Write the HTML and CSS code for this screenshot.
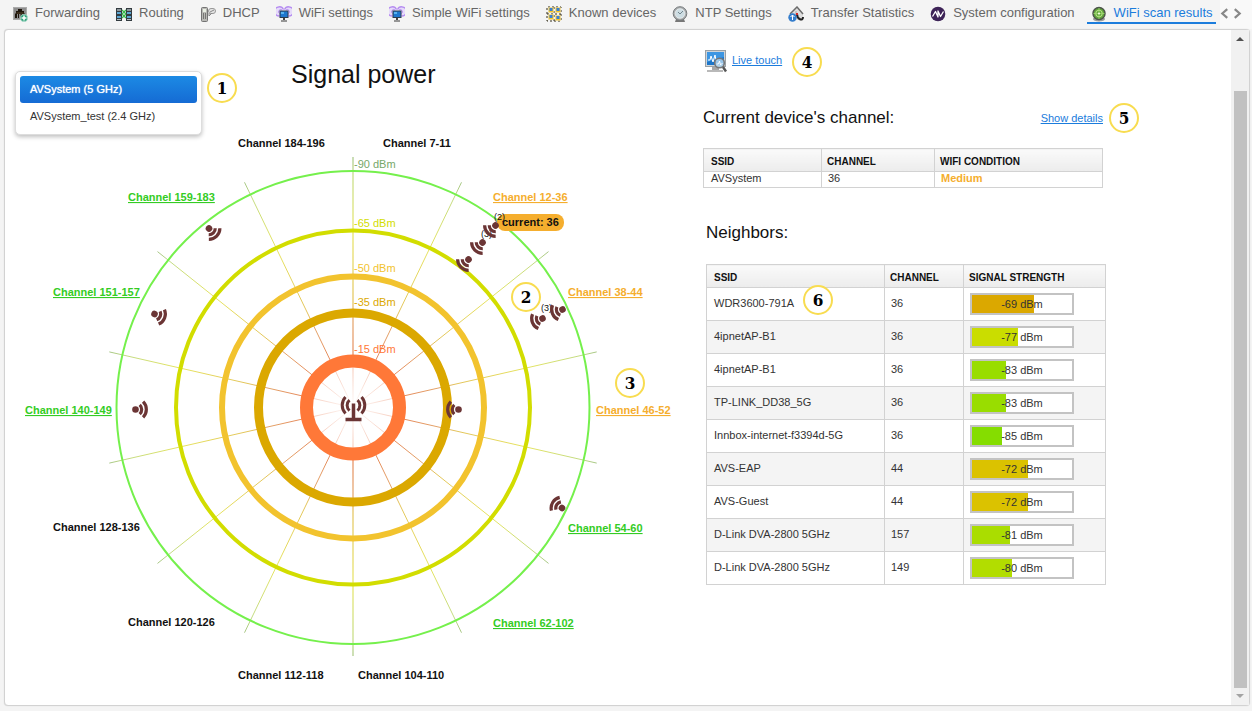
FILE: index.html
```html
<!DOCTYPE html>
<html lang="en">
<head>
<meta charset="utf-8">
<title>WiFi scan results</title>
<link rel="stylesheet" href="styles.css">
</head>
<body>
<nav class="tabs">
  <div class="tab-list">
    <a class="tab" href="#forwarding">
      <svg class="tab-icon" viewBox="0 0 16 16"><rect x="1.500" y="1.500" width="13" height="12" fill="#8d8d8d" stroke="#aaa"/><path d="M3 12V8l1-1V5h2V3h4v2h2v2l1 1v4h-2V8h-1v4H8.500V8H7v4H6V8H5v4z" fill="#1d150c"/><path d="M4.500 7h7" stroke="#5b4526"/><circle cx="12" cy="12" r="3.700" fill="#2ea07a" stroke="#d4eee4" stroke-width=".6"/><path d="M12 9.500v5M9.500 12h5" stroke="#fff" stroke-width="1.500"/></svg>
      <span>Forwarding</span></a>
    <a class="tab" href="#routing">
      <svg class="tab-icon" viewBox="0 0 16 16"><path d="M0 2h6v13H0zM10 2h6v13h-6z" fill="#333b40"/><path d="M1 3h4v2H1zM11 3h4v2h-4z" fill="#8e979b"/><path d="M1 6h4v2H1zM1 10h4v2H1zM11 6h4v2h-4zM11 10h4v2h-4z" fill="#5ba6d2"/><path d="M1 13h4v1H1zM11 13h4v1h-4z" fill="#b5bec2"/><path d="M6 4l4 4M10 4L6 8M6 8l4 4M10 8l-4 4" stroke="#35b949" stroke-width="1.300"/></svg>
      <span>Routing</span></a>
    <a class="tab" href="#dhcp">
      <svg class="tab-icon" viewBox="0 0 16 16"><rect x="1.500" y="1.500" width="6" height="14" rx="1" fill="#b9b9b5" stroke="#747474"/><path d="M3 3h3v3H3z" fill="#e9efe3"/><path d="M3 8h1M5 8h1M3 10h1M5 10h1M3 12h1M5 12h1" stroke="#333"/><rect x="8.500" y="2.500" width="7" height="5" rx="2.500" fill="#e4e4e4" stroke="#999"/><path d="M9 7v3l3-3M10 6l4-2" stroke="#888" fill="none"/></svg>
      <span>DHCP</span></a>
    <a class="tab" href="#wifi">
      <svg class="tab-icon" viewBox="0 0 16 16"><use href="#wifi-monitor"/></svg>
      <span>WiFi settings</span></a>
    <a class="tab" href="#simple-wifi">
      <svg class="tab-icon" viewBox="0 0 16 16"><use href="#wifi-monitor"/></svg>
      <span>Simple WiFi settings</span></a>
    <a class="tab" href="#devices">
      <svg class="tab-icon" viewBox="0 0 16 16"><path d="M1 8V1h14v14H1V8h14M8 1v14" fill="none" stroke="#332c18" stroke-dasharray="2 2"/><path d="M2.500 1.500h5v5h-5zM9.500 1.500h5v5h-5zM2.500 8.500h5v5h-5zM9.500 9.500h5v5h-5z" fill="#f4c426" stroke="#e8d9a0" stroke-width=".5"/><path d="M3.500 2h3v3h-3zM10.500 2h3v3h-3zM3.500 9h3v3h-3zM10.500 10h3v3h-3z" fill="#377fd5"/></svg>
      <span>Known devices</span></a>
    <a class="tab" href="#ntp">
      <svg class="tab-icon" viewBox="0 0 16 16"><path d="M4 13h8l1 3H3z" fill="#777"/><circle cx="8" cy="7.500" r="6.800" fill="#a9adaf" stroke="#767a7c"/><circle cx="8" cy="7.500" r="4.800" fill="#cddde3" stroke="#f1f1f1" stroke-width=".7"/><path d="M8 8l3-3M8 8L6 6" stroke="#71858e"/></svg>
      <span>NTP Settings</span></a>
    <a class="tab" href="#transfer">
      <svg class="tab-icon" viewBox="0 0 16 16"><path d="M3 8l6-6 6 6v6H5z" fill="#dedede"/><path d="M2 8l7-7 6 7" fill="none" stroke="#6b6b6b" stroke-width="1.500"/><path d="M8 5v5l3 4" fill="none" stroke="#aaa"/><path d="M9 8c0 5 6 8 6 3" fill="none" stroke="#222" stroke-width="2"/><path d="M8 7h2v2H8z" fill="#d52a24"/><circle cx="4.500" cy="11.500" r="4.200" fill="#347dcc"/><path d="M4.500 9v5M2.500 11l2-2 2 2" stroke="#fff" fill="none"/></svg>
      <span>Transfer Statistics</span></a>
    <a class="tab" href="#system">
      <svg class="tab-icon" viewBox="0 0 16 16"><circle cx="8" cy="8" r="7.300" fill="#3d2357"/><path d="M2.500 10.500L5.500 5.500 8 11V5l2.500 5.500 3-5" fill="none" stroke="#fff" stroke-width="1.300" stroke-linejoin="round"/></svg>
      <span>System configuration</span></a>
    <a class="tab tab-active" href="#scan" aria-current="page">
      <svg class="tab-icon" viewBox="0 0 16 16"><ellipse cx="8" cy="13" rx="6" ry="2.500" fill="#9b9b9b"/><circle cx="8" cy="7.500" r="6" fill="#61a63b" stroke="#4d554a" stroke-width="1.500"/><circle cx="8" cy="7.500" r="3.300" fill="none" stroke="#bfe68f"/><path d="M8 2v11M2.500 7.500h11" stroke="#9fd672" stroke-width=".8"/><circle cx="8" cy="7.500" r="1" fill="#f4ffe8"/></svg>
      <span>WiFi scan results</span></a>
  </div>
  <div class="tab-scroll">
    <button class="tab-arrow" aria-label="Previous tabs"><svg viewBox="0 0 8 10"><path d="M6.500 1L2 5l4.500 4"/></svg></button>
    <button class="tab-arrow" aria-label="Next tabs"><svg viewBox="0 0 8 10"><path d="M1.500 1L6 5 1.500 9"/></svg></button>
  </div>
</nav>

<main class="panel">
  <div class="content">
    <section class="signal">
      <header class="signal-head">
        <div class="network-menu">
          <button class="network network-on">AVSystem (5 GHz)</button>
          <button class="network">AVSystem_test (2.4 GHz)</button>
        </div>
        <span class="badge">1</span>
        <h1 class="title">Signal power</h1>
      </header>

      <svg class="radar" viewBox="5 136 680 560">
        <defs>
          <radialGradient id="spoke" gradientUnits="userSpaceOnUse" cx="353" cy="407.500" r="252">
            <stop offset="0" stop-color="#fff"/>
            <stop offset=".16" stop-color="#f7cfc0"/>
            <stop offset=".21" stop-color="#e58a5c"/>
            <stop offset=".36" stop-color="#e3a66a"/>
            <stop offset=".42" stop-color="#e3c35a"/>
            <stop offset=".7" stop-color="#e6e460"/>
            <stop offset=".92" stop-color="#c3db82"/>
            <stop offset="1" stop-color="#a3c486"/>
          </radialGradient>
          <g id="wifi-monitor">
            <path d="M3.500 10A4.600 4.600 0 1 1 7.500 3.500M12.500 10A4.600 4.600 0 1 0 8.500 3.500" fill="#e6dbfa" stroke="#b58cf0" stroke-width="1.300"/>
            <path d="M3.500 7.500A2 2 0 1 1 6 4M12.500 7.500A2 2 0 1 0 10 4" fill="none" stroke="#b58cf0"/>
            <rect x="4" y="5" width="8" height="6.500" fill="#1f78cf" stroke="#2d3c50"/>
            <path d="M5 6h3v2H5z" fill="#58b4f2"/>
            <path d="M7 12h2v2H7z" fill="#444"/><path d="M5 15h6" stroke="#777" stroke-width="1.500"/>
          </g>
          <g id="ap">
            <circle r="3.300" fill="#6b3535"/>
            <path d="M4.200-4.600A6.300 6.300 0 0 1 4.200 4.600M7.600-7.800A11 11 0 0 1 7.600 7.800" fill="none" stroke="#6b3535" stroke-width="3.200"/>
          </g>
        </defs>

        <g class="spokes">
          <g id="half">
            <path class="spoke-axis" d="M353 157V407"/>
            <path d="M353 407.500L461.500 182.300M353 407.500L548.500 251.600M353 407.500L596.700 351.900M353 407.500L596.700 463.100M353 407.500L548.500 563.400M353 407.500L461.500 632.700"/>
          </g>
          <path class="spoke-axis" d="M353 408V656"/>
          <path d="M353 407.500L244.500 182.300M353 407.500L157.500 251.600M353 407.500L109.300 351.900M353 407.500L109.300 463.100M353 407.500L157.500 563.400M353 407.500L244.500 632.700"/>
        </g>
        <g class="rings">
          <circle cx="353" cy="407.500" r="236.500" stroke="#75f04c" stroke-width="2"/>
          <circle cx="353" cy="407.500" r="177" stroke="#d2dd00" stroke-width="4"/>
          <circle cx="353" cy="407.500" r="131" stroke="#f2c32e" stroke-width="6"/>
          <circle cx="353" cy="407.500" r="94.500" stroke="#dba800" stroke-width="9"/>
          <circle cx="353" cy="407.500" r="46.500" stroke="#ff7838" stroke-width="13"/>
        </g>

        <g class="level">
          <text x="354" y="168" fill="#76a768">-90 dBm</text>
          <text x="354" y="227" fill="#d2dd00">-65 dBm</text>
          <text x="354" y="272" fill="#f2c32e">-50 dBm</text>
          <text x="354" y="306" fill="#dba800">-35 dBm</text>
          <text x="354" y="353" fill="#ff7838">-15 dBm</text>
        </g>

        <g class="antenna">
          <path d="M349.500 400A7 7 0 0 0 349.500 410.500M357.500 400A7 7 0 0 1 357.500 410.500M345.500 397A12 12 0 0 0 345.500 413.500M361.500 397A12 12 0 0 1 361.500 413.500"/>
          <path class="mast" d="M353.500 403.500V419M345.500 419.500H361.500"/>
        </g>

        <g class="channel">
          <text x="238" y="147">Channel 184-196</text>
          <text x="383" y="147">Channel 7-11</text>
          <a class="good" href="#ch159"><text x="128" y="201">Channel 159-183</text></a>
          <a class="medium" href="#ch12"><text x="493" y="201">Channel 12-36</text></a>
          <a class="good" href="#ch151"><text x="53" y="296">Channel 151-157</text></a>
          <a class="medium" href="#ch38"><text x="568" y="296">Channel 38-44</text></a>
          <a class="good" href="#ch140"><text x="25" y="414">Channel 140-149</text></a>
          <a class="medium" href="#ch46"><text x="596" y="414">Channel 46-52</text></a>
          <text x="53" y="531">Channel 128-136</text>
          <a class="good" href="#ch54"><text x="568" y="532">Channel 54-60</text></a>
          <text x="128" y="626">Channel 120-126</text>
          <a class="good" href="#ch62"><text x="493" y="627">Channel 62-102</text></a>
          <text x="238" y="679">Channel 112-118</text>
          <text x="358" y="679">Channel 104-110</text>
          <rect x="497" y="214" width="67" height="17" rx="8" fill="#f5ae2e"/>
          <text x="502" y="226">current: 36</text>
        </g>

        <g class="count">
          <text x="494" y="220">(2)</text>
          <text x="481" y="237">(3)</text>
          <text x="541" y="311">(3)</text>
        </g>
        <use href="#ap" transform="translate(209 228.500) rotate(45)"/>
        <use href="#ap" transform="translate(154.500 314) rotate(22)"/>
        <use href="#ap" transform="translate(135.500 409.500)"/>
        <use href="#ap" transform="translate(495.500 225.500) rotate(135)"/>
        <use href="#ap" transform="translate(482.500 242.500) rotate(135)"/>
        <use href="#ap" transform="translate(468.500 259.500) rotate(135)"/>
        <use href="#ap" transform="translate(542.500 318.500) rotate(158)"/>
        <use href="#ap" transform="translate(562.500 309.500) rotate(158)"/>
        <use href="#ap" transform="translate(458.500 409.500) rotate(180)"/>
        <use href="#ap" transform="translate(562 508) rotate(212)"/>

        <g class="note">
          <circle cx="526" cy="297" r="14"/><text x="526" y="303">2</text>
          <circle cx="630" cy="383" r="14"/><text x="630" y="389">3</text>
        </g>
      </svg>
    </section>

    <section class="details">
      <div class="live">
        <svg class="live-icon" viewBox="0 0 22 24"><rect x=".5" y=".5" width="20" height="16" fill="#d0d4d7" stroke="#9ba1a5"/><rect x="2" y="2" width="17" height="13" fill="#1d76c9"/><path d="M2 2h17v5L2 12z" fill="#3d96e2"/><path d="M3 10h2l1-4 2 6 2-7 1 5h2" fill="none" stroke="#fff"/><path d="M7 17h7v3H7z" fill="#a7a7a7"/><path d="M2 21h16" stroke="#b9b9b9" stroke-width="2"/><circle cx="14.500" cy="13" r="4.800" fill="#aed3ee" fill-opacity=".85" stroke="#777" stroke-width="1.600"/><path d="M11.500 14h2l1-3 1 4 2-2" fill="none" stroke="#fff"/><path d="M18 17l3 4.500" stroke="#555" stroke-width="2.400"/></svg>
        <a class="link" href="#live">Live touch</a>
        <span class="badge">4</span>
      </div>
      <div class="section-head">
        <h2>Current device's channel:</h2>
        <a class="link" href="#details">Show details</a>
        <span class="badge">5</span>
      </div>
      <table class="grid current">
        <colgroup><col class="c-name"><col class="c-chan"><col></colgroup>
        <thead><tr><th>SSID</th><th>CHANNEL</th><th>WIFI CONDITION</th></tr></thead>
        <tbody><tr><td>AVSystem</td><td>36</td><td class="condition">Medium</td></tr></tbody>
      </table>

      <div class="neighbors">
        <h2>Neighbors:</h2>
        <table class="grid scan">
          <colgroup><col class="c-ssid"><col class="c-num"><col></colgroup>
          <thead><tr><th>SSID</th><th>CHANNEL</th><th>SIGNAL STRENGTH</th></tr></thead>
          <tbody>
            <tr><td class="noted">WDR3600-791A<span class="badge badge-over">6</span></td><td>36</td><td><div class="bar"><i style="width:62%;background:#dba800"></i><span>-69 dBm</span></div></td></tr>
            <tr><td>4ipnetAP-B1</td><td>36</td><td><div class="bar"><i style="width:46%;background:#cadd00"></i><span>-77 dBm</span></div></td></tr>
            <tr><td>4ipnetAP-B1</td><td>36</td><td><div class="bar"><i style="width:34%;background:#99dd00"></i><span>-83 dBm</span></div></td></tr>
            <tr><td>TP-LINK_DD38_5G</td><td>36</td><td><div class="bar"><i style="width:34%;background:#99dd00"></i><span>-83 dBm</span></div></td></tr>
            <tr><td>Innbox-internet-f3394d-5G</td><td>36</td><td><div class="bar"><i style="width:30%;background:#85dd00"></i><span>-85 dBm</span></div></td></tr>
            <tr><td>AVS-EAP</td><td>44</td><td><div class="bar"><i style="width:56%;background:#dbc200"></i><span>-72 dBm</span></div></td></tr>
            <tr><td>AVS-Guest</td><td>44</td><td><div class="bar"><i style="width:56%;background:#dbc200"></i><span>-72 dBm</span></div></td></tr>
            <tr><td>D-Link DVA-2800 5GHz</td><td>157</td><td><div class="bar"><i style="width:38%;background:#aadd00"></i><span>-81 dBm</span></div></td></tr>
            <tr><td>D-Link DVA-2800 5GHz</td><td>149</td><td><div class="bar"><i style="width:40%;background:#b2dd00"></i><span>-80 dBm</span></div></td></tr>
          </tbody>
        </table>
      </div>
    </section>
  </div>
  <div class="scrollbar" aria-hidden="true">
    <span class="scroll-up"></span>
    <span class="scroll-thumb"></span>
    <span class="scroll-down"></span>
  </div>
</main>
</body>
</html>
```

FILE: styles.css
```css
* { box-sizing: border-box; }

body {
  margin: 0;
  min-height: 100vh;
  display: flex;
  flex-direction: column;
  background: #f4f4f4;
  color: #111;
  font: 11px/14px "Liberation Sans", Arial, sans-serif;
}

button { font: inherit; border: 0; background: none; cursor: pointer; }
h1, h2 { margin: 0; font-weight: 400; }

/* Tabs */
.tabs { display: flex; height: 29px; }
.tab-list { flex: 1; display: flex; gap: 9px; padding-left: 8px; min-width: 0; overflow: hidden; }
.tab {
  display: flex;
  align-items: flex-end;
  gap: 7px;
  height: 24px;
  padding: 0 3px 0 4px;
  border-bottom: 2px solid transparent;
  color: #666;
  font-size: 13px;
  line-height: 16px;
  text-decoration: none;
  white-space: nowrap;
}
.tab span { padding-bottom: 1px; }
.tab-icon { width: 16px; height: 16px; flex: none; }
.tab-active { color: #1b7cdc; border-bottom-color: #1b7cdc; }
.tab-scroll { display: flex; align-items: center; gap: 4px; padding: 0 10px 2px 0; background: #f9f9f9; }
.tab-arrow { display: flex; padding: 0; }
.tab-arrow svg { width: 9px; height: 11px; fill: none; stroke: #888; stroke-width: 2; }

/* Panel */
.panel {
  flex: 1;
  display: flex;
  margin: 0 2px 5px 4px;
  border: 1px solid #d2d2d2;
  border-radius: 4px;
  background: #fff;
  box-shadow: 0 0 1px #ccc;
}
.content { flex: 1; display: flex; min-width: 0; overflow: hidden; }
.scrollbar {
  width: 18px;
  display: flex;
  flex-direction: column;
  align-items: center;
  padding: 7px 2px;
  background: #f1f1f1;
}
.scroll-up, .scroll-down { border: 4px solid transparent; }
.scroll-up { border-top-width: 0; border-bottom-color: #505050; margin-bottom: 50px; }
.scroll-down { border-bottom-width: 0; border-top-color: #a3a3a3; margin-top: 6px; }
.scroll-thumb { flex: 1; width: 13px; background: #c1c1c1; }

/* Signal power */
.signal { flex: 0 0 680px; display: flex; flex-direction: column; }
.signal-head { display: flex; align-items: flex-start; height: 106px; padding: 41px 0 0 10px; }
.network-menu {
  width: 187px;
  padding: 4px;
  border: 1px solid #ddd;
  border-radius: 5px;
  background: #fff;
  box-shadow: 0 2px 4px rgba(0, 0, 0, .25);
}
.network {
  display: block;
  width: 100%;
  height: 27px;
  padding: 0 10px 2px;
  border-radius: 3px;
  color: #333;
  text-align: left;
}
.network-on {
  background: linear-gradient(#1c8ae4, #156bd4);
  color: #fff;
  text-shadow: 0 0 1px #fff;
}
.signal-head .badge { margin: 2px 0 0 5px; }
.title { margin-left: 54px; margin-top: -12px; font-size: 25px; line-height: 30px; }

.badge {
  display: inline-flex;
  align-items: center;
  justify-content: center;
  width: 30px;
  height: 30px;
  border: 2px solid #f8dc50;
  border-radius: 50%;
  background: #fff;
  color: #000;
  font: 700 17px/20px "DejaVu Serif Condensed", "DejaVu Serif", serif;
}

.radar { width: 100%; display: block; }
.spokes { fill: none; stroke: url(#spoke); stroke-width: 1; }
.spoke-axis { stroke-width: 2; stroke-opacity: .6; }
.rings { fill: none; }
.level { font-size: 11px; }
.antenna { fill: none; stroke: #6b3535; stroke-width: 3; }
.mast { stroke-width: 3.5; }
.channel { font-size: 11px; font-weight: 700; fill: #111; }
.channel a { text-decoration: underline; }
.good { fill: #34cc24; }
.medium { fill: #f5ae2e; }
.count { font-size: 9px; fill: #111; }
.note circle { fill: #fff; stroke: #f8dc50; stroke-width: 2; }
.note text {
  font: 700 17px "DejaVu Serif Condensed", "DejaVu Serif", serif;
  text-anchor: middle;
}

/* Details */
.details { flex: 1; padding: 17px 0 0 18px; }
.details h2 { font-size: 17px; line-height: 20px; }
.link { color: #1b7cdc; text-decoration: underline; }
.live { display: flex; align-items: center; padding-left: 2px; }
.live .link { margin-left: 5px; padding-bottom: 4px; }
.live-icon { width: 22px; height: 24px; }
.live .badge { margin-left: 10px; }
.section-head { display: flex; align-items: center; width: 436px; margin-top: 26px; }
.section-head .link { margin-left: auto; }
.section-head .badge { margin-left: 6px; }

.grid { width: 400px; border-collapse: collapse; table-layout: fixed; }
.grid th, .grid td { border: 1px solid #d2d2d2; text-align: left; }
.grid th {
  height: 23px;
  padding: 4px 5px 0;
  background: linear-gradient(#fafafa, #ececec);
  font-size: 10px;
  line-height: 14px;
}
.grid td { padding: 0 6px 2px; color: #333; }
.grid th:first-child, .grid td:first-child { padding-left: 7px; }
.current { margin-top: 15px; }
.current td { height: 16px; line-height: 13px; }
.c-name { width: 118px; }
.c-chan { width: 113px; }
.current .condition { color: #f5ae2e; font-weight: 700; }

.neighbors { padding: 35px 0 0 3px; }
.scan { margin-top: 21px; }
.c-ssid { width: 178px; }
.c-num { width: 79px; }
.scan td { height: 33px; }
.scan td:last-child { padding-bottom: 0; }
.scan tr:nth-child(even) td { background: #f4f4f4; }
.noted { position: relative; }
.badge-over { position: absolute; left: 96px; top: -3px; }
.bar {
  position: relative;
  display: flex;
  width: 104px;
  height: 22px;
  border: 2px solid #c3c3c3;
  background: #fff;
}
.bar span { position: absolute; inset: 0; text-align: center; line-height: 19px; }
```
